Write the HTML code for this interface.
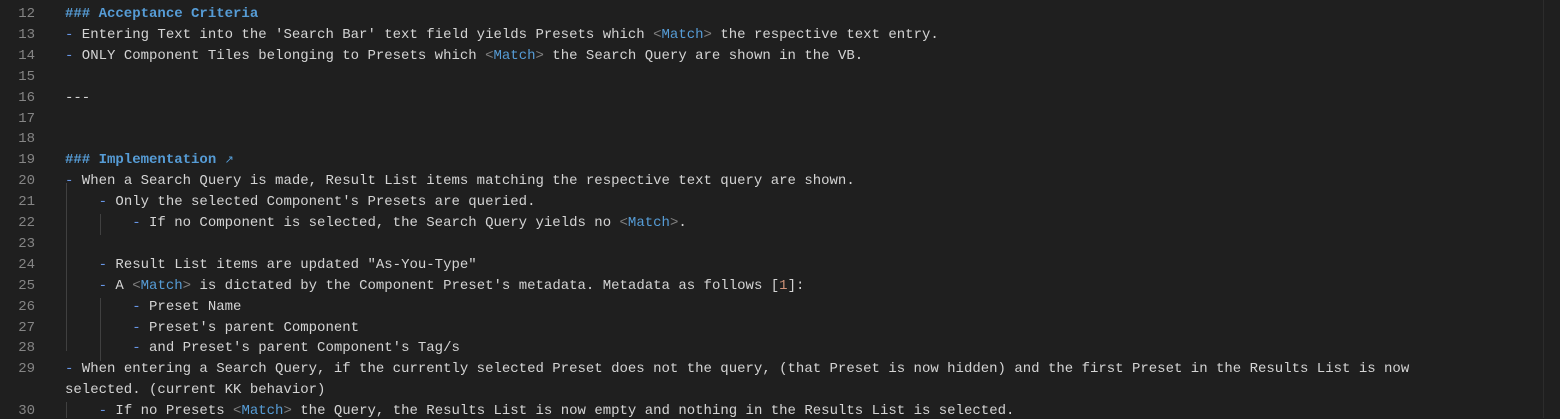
<!DOCTYPE html>
<html><head><style>
body{margin:0;background:#1f1f1f;width:1560px;height:418px;overflow:hidden;position:relative;font-family:"Liberation Mono",monospace;font-size:14px}
.ln{position:absolute;left:0;width:35px;text-align:right;color:#858585}
.t{position:absolute;left:65px;color:#d4d4d4;white-space:pre}
.h{color:#569cd6;font-weight:bold}
.d{color:#6796e6}
.m{color:#569cd6}.a{color:#808080}
.o{color:#ce9178}
.g{position:absolute;width:1px;background:#404040}
.vr{position:absolute;left:1543px;top:0;width:1px;height:418px;background:#2c2c2c}
</style></head><body>
<div class="vr"></div>
<div class="g" style="left:66px;top:183px;height:168px"></div>
<div class="g" style="left:66px;top:402px;height:16px"></div>
<div class="g" style="left:100px;top:214px;height:21px"></div>
<div class="g" style="left:100px;top:298px;height:63px"></div>
<div id="c"></div>
<script>
const L=[
[12,'<span class="h">### Acceptance Criteria</span>'],
[13,'<span class="d">-</span> Entering Text into the \'Search Bar\' text field yields Presets which <span class="a">&lt;</span><span class="m">Match</span><span class="a">&gt;</span> the respective text entry.'],
[14,'<span class="d">-</span> ONLY Component Tiles belonging to Presets which <span class="a">&lt;</span><span class="m">Match</span><span class="a">&gt;</span> the Search Query are shown in the VB.'],
[15,''],[16,'---'],[17,''],[18,''],
[19,'<span class="h">### Implementation</span> <span class="m" style="font-size:11px">&#x2197;</span>'],
[20,'<span class="d">-</span> When a Search Query is made, Result List items matching the respective text query are shown.'],
[21,'    <span class="d">-</span> Only the selected Component\'s Presets are queried.'],
[22,'        <span class="d">-</span> If no Component is selected, the Search Query yields no <span class="a">&lt;</span><span class="m">Match</span><span class="a">&gt;</span>.'],
[23,''],
[24,'    <span class="d">-</span> Result List items are updated "As-You-Type"'],
[25,'    <span class="d">-</span> A <span class="a">&lt;</span><span class="m">Match</span><span class="a">&gt;</span> is dictated by the Component Preset\'s metadata. Metadata as follows [<span class="o">1</span>]:'],
[26,'        <span class="d">-</span> Preset Name'],
[27,'        <span class="d">-</span> Preset\'s parent Component'],
[28,'        <span class="d">-</span> and Preset\'s parent Component\'s Tag/s'],
[29,'<span class="d">-</span> When entering a Search Query, if the currently selected Preset does not the query, (that Preset is now hidden) and the first Preset in the Results List is now'],
[null,'selected. (current KK behavior)'],
[30,'    <span class="d">-</span> If no Presets <span class="a">&lt;</span><span class="m">Match</span><span class="a">&gt;</span> the Query, the Results List is now empty and nothing in the Results List is selected.']
];
let h='';L.forEach((l,i)=>{const y=13+i*20.9-7;
if(l[0]!==null)h+=`<div class="ln" style="top:${y}px">${l[0]}</div>`;
h+=`<div class="t" style="top:${y}px">${l[1]}</div>`;});
document.getElementById('c').innerHTML=h;
</script>
</body></html>
